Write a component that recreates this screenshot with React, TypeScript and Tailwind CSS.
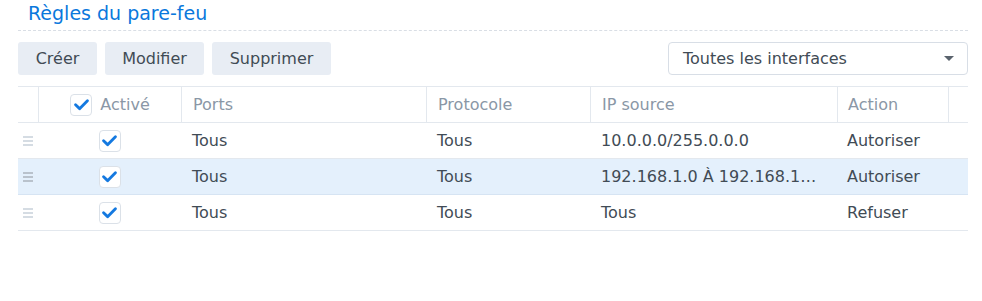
import React from "react";

type Rule = {
  ports: string;
  protocol: string;
  source: string;
  action: string;
  selected?: boolean;
};

const rules: Rule[] = [
  { ports: "Tous", protocol: "Tous", source: "10.0.0.0/255.0.0.0", action: "Autoriser" },
  { ports: "Tous", protocol: "Tous", source: "192.168.1.0 À 192.168.1…", action: "Autoriser", selected: true },
  { ports: "Tous", protocol: "Tous", source: "Tous", action: "Refuser" },
];

const CheckBox = () => (
  <span className="flex h-[22px] w-[22px] items-center justify-center rounded-[4px] border border-[#dbe1e8] bg-white">
    <svg width="17" height="17" viewBox="0 0 16 16" fill="none">
      <path d="M2.4 8.3 L6.2 11.9 L13.6 4.4" stroke="#1479e0" strokeWidth="2.7" strokeLinecap="round" strokeLinejoin="round" />
    </svg>
  </span>
);

const DragHandle = ({ dark }: { dark?: boolean }) => (
  <div className="flex w-[20px] flex-col items-center gap-[2px]">
    {[0, 1, 2].map((i) => (
      <span key={i} className={`block h-[2px] w-[10px] ${dark ? "bg-[#b9c2cc]" : "bg-[#d5dce3]"}`} />
    ))}
  </div>
);

const cols = "grid grid-cols-[20px_143px_245px_164px_247px_111px_20px]";

export default function App() {
  return (
    <div className="h-[301px] w-[982px] bg-white pl-[18px] pr-[14px] font-['DejaVu_Sans',sans-serif] text-[16px] text-[#414b55]">
      <div className="flex h-[31px] items-center border-b border-dashed border-[#d9dee5] pb-[3px] pl-[10px] text-[19px] text-[#0a78dc]">
        Règles du pare-feu
      </div>

      <div className="mt-[11px] flex h-[33px] items-center">
        <div className="flex gap-2">
          <button className="h-[33px] w-[79px] rounded-[3px] bg-[#e8edf4] text-[#414b55]">Créer</button>
          <button className="h-[33px] w-[99px] rounded-[3px] bg-[#e8edf4] text-[#414b55]">Modifier</button>
          <button className="h-[33px] w-[119px] rounded-[3px] bg-[#e8edf4] text-[#414b55]">Supprimer</button>
        </div>
        <div className="ml-auto flex h-[33px] w-[300px] items-center justify-between rounded-[4px] border border-[#d8dee6] pl-[14px] pr-[13px]">
          <span>Toutes les interfaces</span>
          <svg width="10" height="6" viewBox="0 0 10 6">
            <path d="M0 0 H10 L5 5 Z" fill="#5a636d" />
          </svg>
        </div>
      </div>

      <div className="mt-[11px]">
        <div className={`${cols} h-[37px] border-y border-[#e3e8ee] text-[#8a97a6]`}>
          <div />
          <div className="flex items-center justify-center gap-2 border-l border-[#e3e8ee]">
            <CheckBox />
            <span>Activé</span>
          </div>
          <div className="flex items-center border-l border-[#e3e8ee] pl-[11px]">Ports</div>
          <div className="flex items-center border-l border-[#e3e8ee] pl-[11px]">Protocole</div>
          <div className="flex items-center border-l border-[#e3e8ee] pl-[11px]">IP source</div>
          <div className="flex items-center border-l border-[#e3e8ee] pl-[10px]">Action</div>
          <div className="border-l border-[#e3e8ee]" />
        </div>

        {rules.map((r, i) => (
          <div
            key={i}
            className={`${cols} h-[36px] border-b ${r.selected ? "border-[#d6e4f3] bg-[#e4f0fc]" : "border-[#e3e8ee]"}`}
          >
            <div className="flex items-center justify-center">
              <DragHandle dark={r.selected} />
            </div>
            <div className="flex items-center justify-center">
              <CheckBox />
            </div>
            <div className="flex items-center pl-[11px]">{r.ports}</div>
            <div className="flex items-center pl-[11px]">{r.protocol}</div>
            <div className="flex items-center pl-[11px] pr-[10px] whitespace-nowrap">{r.source}</div>
            <div className="flex items-center pl-[10px]">{r.action}</div>
            <div />
          </div>
        ))}
      </div>
    </div>
  );
}
